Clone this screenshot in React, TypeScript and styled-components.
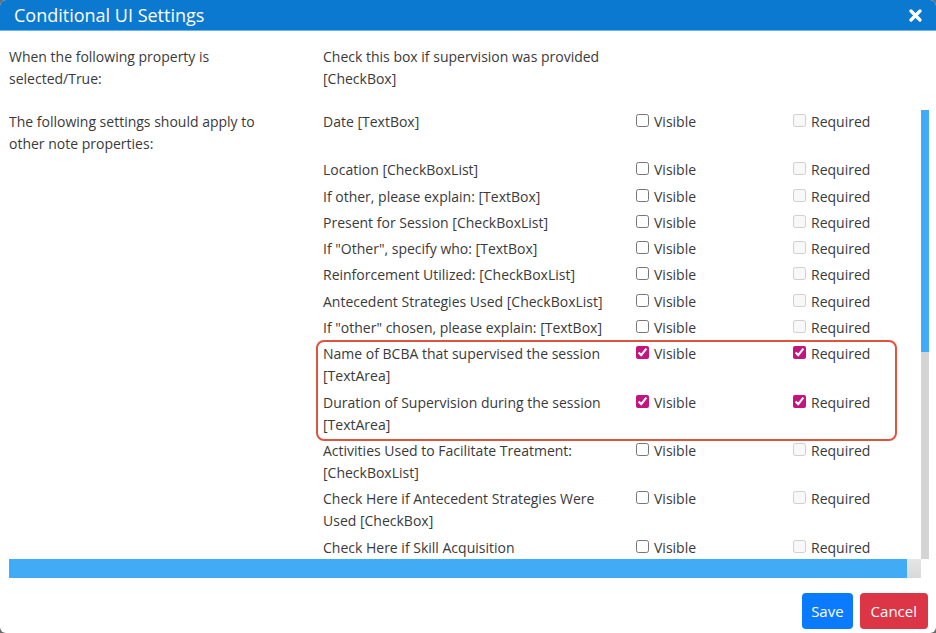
import React from 'react';
import styled, { createGlobalStyle } from 'styled-components';

const Global = createGlobalStyle`
  html, body { margin: 0; padding: 0; background: #6b6b6b; width: 936px; height: 633px; overflow: hidden; }
  #root { width: 936px; height: 633px; }
  * { box-sizing: border-box; }
`;

const Dialog = styled.div`
  width: 936px;
  height: 633px;
  background: #fff;
  border-radius: 6px;
  overflow: hidden;
  display: flex;
  flex-direction: column;
  font-family: "Open Sans", "Noto Sans", sans-serif;
  font-size: 14px;
  color: #3a3a3a;
`;

const Header = styled.div`
  height: 31px;
  flex: none;
  background: #0c79d0;
  border-bottom: 1px solid #6cb2e8;
  display: flex;
  align-items: center;
  justify-content: space-between;
  padding: 0 14px 0 14px;
  color: #fff;
`;

const Title = styled.h1`
  margin: 0;
  font-size: 18px;
  font-weight: 400;
  line-height: 28px;
`;

const CloseButton = styled.button`
  border: none;
  background: transparent;
  padding: 0;
  width: 14px;
  height: 14px;
  display: flex;
  align-items: center;
  justify-content: center;
  cursor: pointer;
`;

const Body = styled.div`
  flex: 1;
  display: flex;
  flex-direction: column;
  padding: 15px 7px 0 9px;
  min-height: 0;
`;

const TopRow = styled.div`
  display: grid;
  grid-template-columns: 314px 300px;
  line-height: 21.6px;
`;

const LeftCell = styled.div`
  padding-right: 34px;
`;

const ScrollFrame = styled.div`
  margin-top: 20.8px;
  flex: none;
  display: grid;
  grid-template-columns: 912px 8px;
  grid-template-rows: 449px 19px;
`;

const Viewport = styled.div`
  overflow: hidden;
`;

const VBar = styled.div`
  display: flex;
  flex-direction: column;
  background: #d4d4d4;
`;

const VThumb = styled.div`
  height: 242px;
  background: #42abf5;
`;

const HBar = styled.div`
  display: flex;
  background: linear-gradient(#e6e6e6, #d8d8d8);
`;

const HThumb = styled.div`
  width: 898px;
  background: #42abf5;
`;

const Corner = styled.div`
  background: #fff;
`;

const ScrollInner = styled.div`
  display: flex;
  width: 926px;
  line-height: 22px;
`;

const SideLabel = styled(LeftCell)`
  width: 314px;
  flex: none;
  padding-top: 1.3px;
`;

const Rows = styled.div`
  flex: 1;
  display: flex;
  flex-direction: column;
`;

const Row = styled.div<{ $minHeight?: number }>`
  display: grid;
  grid-template-columns: 314px 157px 1fr;
  padding: 1.3px 0 3px;
  min-height: ${(p) => (p.$minHeight ? `${p.$minHeight}px` : 'auto')};
`;

const PropLabel = styled.div`
  padding-right: 14px;
`;

const CheckCell = styled.label`
  display: flex;
  align-items: flex-start;
  gap: 5px;
`;

const Box = styled.input`
  margin: 3px 0 0 -1px;
  width: 13px;
  height: 13px;
  accent-color: #c2157e;
  flex: none;
`;

const Highlight = styled.div`
  border: 2px solid #e0533d;
  border-radius: 8px;
  margin: -2px 38px -2px -7px;
  padding-left: 5px;
`;

const Footer = styled.div`
  flex: none;
  display: flex;
  justify-content: flex-end;
  gap: 7px;
  padding: 15px 8px 4px;
`;

const Button = styled.button<{ $variant: 'primary' | 'danger' }>`
  height: 36px;
  padding: 0 ${(p) => (p.$variant === 'primary' ? '9px' : '11px')};
  border: none;
  border-radius: 4px;
  color: #fff;
  font-family: "Open Sans", "Noto Sans", sans-serif;
  font-size: 15px;
  background: ${(p) => (p.$variant === 'primary' ? '#0a7bff' : '#dc3545')};
  cursor: pointer;
`;

type Item = { label: string; checked?: boolean; minHeight?: number };

const before: Item[] = [
  { label: 'Date [TextBox]', minHeight: 48 },
  { label: 'Location [CheckBoxList]' },
  { label: 'If other, please explain: [TextBox]' },
  { label: 'Present for Session [CheckBoxList]' },
  { label: 'If "Other", specify who: [TextBox]' },
  { label: 'Reinforcement Utilized: [CheckBoxList]' },
  { label: 'Antecedent Strategies Used [CheckBoxList]' },
  { label: 'If "other" chosen, please explain: [TextBox]' },
];

const highlighted: Item[] = [
  { label: 'Name of BCBA that supervised the session [TextArea]', checked: true },
  { label: 'Duration of Supervision during the session [TextArea]', checked: true },
];

const after: Item[] = [
  { label: 'Activities Used to Facilitate Treatment: [CheckBoxList]' },
  { label: 'Check Here if Antecedent Strategies Were Used [CheckBox]' },
  { label: 'Check Here if Skill Acquisition' },
];

const PropRow = ({ item }: { item: Item }) => (
  <Row $minHeight={item.minHeight}>
    <PropLabel>{item.label}</PropLabel>
    <CheckCell>
      <Box type="checkbox" defaultChecked={item.checked} />
      Visible
    </CheckCell>
    <CheckCell>
      <Box type="checkbox" defaultChecked={item.checked} disabled={!item.checked} />
      Required
    </CheckCell>
  </Row>
);

export default function App() {
  return (
    <>
      <Global />
      <Dialog>
        <Header>
          <Title>Conditional UI Settings</Title>
          <CloseButton aria-label="Close">
            <svg width="13" height="13" viewBox="0 0 13 13">
              <path d="M2 2 L11 11 M11 2 L2 11" stroke="#fff" strokeWidth="3.2" strokeLinecap="round" />
            </svg>
          </CloseButton>
        </Header>
        <Body>
          <TopRow>
            <LeftCell>When the following property is selected/True:</LeftCell>
            <div>Check this box if supervision was provided [CheckBox]</div>
          </TopRow>
          <ScrollFrame>
            <Viewport>
              <ScrollInner>
                <SideLabel>The following settings should apply to other note properties:</SideLabel>
                <Rows>
                  {before.map((it) => (
                    <PropRow key={it.label} item={it} />
                  ))}
                  <Highlight>
                    {highlighted.map((it) => (
                      <PropRow key={it.label} item={it} />
                    ))}
                  </Highlight>
                  {after.map((it) => (
                    <PropRow key={it.label} item={it} />
                  ))}
                </Rows>
              </ScrollInner>
            </Viewport>
            <VBar>
              <VThumb />
            </VBar>
            <HBar>
              <HThumb />
            </HBar>
            <Corner />
          </ScrollFrame>
        </Body>
        <Footer>
          <Button $variant="primary">Save</Button>
          <Button $variant="danger">Cancel</Button>
        </Footer>
      </Dialog>
    </>
  );
}
